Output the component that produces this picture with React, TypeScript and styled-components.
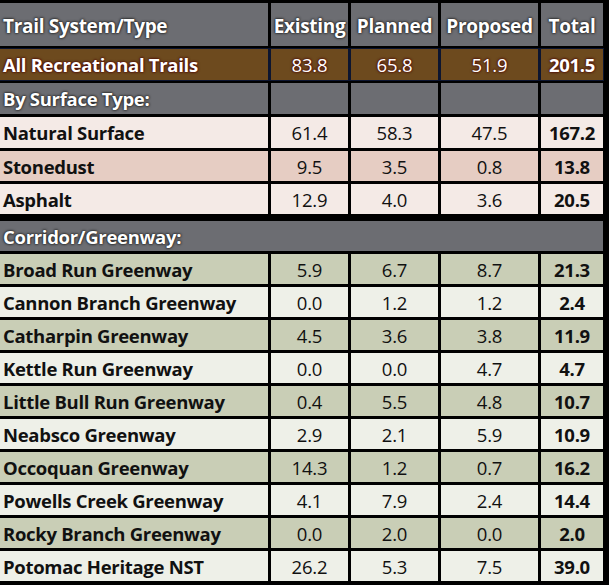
import styled, { createGlobalStyle, css } from 'styled-components';

const GlobalStyle = createGlobalStyle`
  html, body {
    margin: 0;
    padding: 0;
    background: #000;
  }
  body {
    font-family: 'Open Sans', 'Noto Sans', sans-serif;
  }
`;

type Tone = 'head' | 'total' | 'section' | 'rose' | 'roseDeep' | 'sage' | 'pale';

const tones: Record<Tone, { bg: string; color: string; shadow: string }> = {
  head: { bg: '#6c6d72', color: '#fff', shadow: '0 0 2px #1a1a1a, 0 0 3px #1a1a1a' },
  total: { bg: '#6d4a1e', color: '#fff', shadow: '0 0 2px #5a0000, 0 0 3px #3a0000' },
  section: { bg: '#6c6d72', color: '#fff', shadow: '0 0 2px #1a1a1a, 0 0 3px #1a1a1a' },
  rose: { bg: '#f4eae6', color: '#111', shadow: 'none' },
  roseDeep: { bg: '#e6cdc3', color: '#111', shadow: 'none' },
  sage: { bg: '#c9ceb6', color: '#111', shadow: 'none' },
  pale: { bg: '#eef0e8', color: '#111', shadow: 'none' },
};

const Table = styled.div`
  width: 609px;
  height: 585px;
  box-sizing: border-box;
  padding: 3px 6px 0 0;
  background: #000;
  display: flex;
  flex-direction: column;
  gap: 3px;
`;

const Row = styled.div<{ $h: number; $tone: Tone; $spaced?: boolean }>`
  display: grid;
  grid-template-columns: 268px 77px 87px 97px 62px;
  column-gap: 3px;
  height: ${(p) => p.$h}px;
  margin-top: ${(p) => (p.$spaced ? 4 : 0)}px;
  ${(p) =>
    p.$tone === 'total' &&
    css`
      background: #0c1530;
      outline: 1px solid #0c1530;
    `}
`;

const Cell = styled.div<{ $tone: Tone; $label?: boolean; $bold?: boolean }>`
  background: ${(p) => tones[p.$tone].bg};
  color: ${(p) => tones[p.$tone].color};
  text-shadow: ${(p) => tones[p.$tone].shadow};
  display: flex;
  align-items: center;
  justify-content: ${(p) => (p.$label ? 'flex-start' : 'center')};
  padding-left: ${(p) => (p.$label ? 3 : 0)}px;
  font-size: 18.5px;
  font-weight: ${(p) => (p.$bold || p.$label ? 700 : 400)};
  letter-spacing: ${(p) => (p.$label || p.$bold ? '-0.3px' : '-0.2px')};
  white-space: nowrap;
  overflow: hidden;
`;

const HeadCell = styled(Cell)`
  font-size: 19px;
  padding-top: 2px;
`;

type Line = { label: string; tone: Tone; values?: string[]; spaced?: boolean; h?: number };

const lines: Line[] = [
  { label: 'All Recreational Trails', tone: 'total', values: ['83.8', '65.8', '51.9', '201.5'], h: 31 },
  { label: 'By Surface Type:', tone: 'section', values: ['', '', '', ''], h: 31 },
  { label: 'Natural Surface', tone: 'rose', values: ['61.4', '58.3', '47.5', '167.2'], h: 31 },
  { label: 'Stonedust', tone: 'roseDeep', values: ['9.5', '3.5', '0.8', '13.8'] },
  { label: 'Asphalt', tone: 'rose', values: ['12.9', '4.0', '3.6', '20.5'] },
  { label: 'Corridor/Greenway:', tone: 'section', spaced: true },
  { label: 'Broad Run Greenway', tone: 'sage', values: ['5.9', '6.7', '8.7', '21.3'] },
  { label: 'Cannon Branch Greenway', tone: 'pale', values: ['0.0', '1.2', '1.2', '2.4'] },
  { label: 'Catharpin Greenway', tone: 'sage', values: ['4.5', '3.6', '3.8', '11.9'] },
  { label: 'Kettle Run Greenway', tone: 'pale', values: ['0.0', '0.0', '4.7', '4.7'] },
  { label: 'Little Bull Run Greenway', tone: 'sage', values: ['0.4', '5.5', '4.8', '10.7'] },
  { label: 'Neabsco Greenway', tone: 'pale', values: ['2.9', '2.1', '5.9', '10.9'] },
  { label: 'Occoquan Greenway', tone: 'sage', values: ['14.3', '1.2', '0.7', '16.2'] },
  { label: 'Powells Creek Greenway', tone: 'pale', values: ['4.1', '7.9', '2.4', '14.4'] },
  { label: 'Rocky Branch Greenway', tone: 'sage', values: ['0.0', '2.0', '0.0', '2.0'] },
  { label: 'Potomac Heritage NST', tone: 'pale', values: ['26.2', '5.3', '7.5', '39.0'] },
];

const SectionBand = styled.div`
  grid-column: 1 / -1;
  background: #6c6d72;
  color: #fff;
  text-shadow: 0 0 2px #1a1a1a, 0 0 3px #1a1a1a;
  display: flex;
  align-items: center;
  padding-left: 3px;
  font-size: 18.5px;
  font-weight: 700;
  letter-spacing: -0.3px;
`;

export default function App() {
  return (
    <>
      <GlobalStyle />
      <Table>
        <Row $h={43} $tone="head">
          {['Trail System/Type', 'Existing', 'Planned', 'Proposed', 'Total'].map((t, i) => (
            <HeadCell key={t} $tone="head" $label={i === 0} $bold>
              {t}
            </HeadCell>
          ))}
        </Row>
        {lines.map((l) => (
          <Row key={l.label} $h={l.h ?? 30} $tone={l.tone} $spaced={l.spaced}>
            {l.values ? (
              <>
                <Cell $tone={l.tone} $label>
                  {l.label}
                </Cell>
                {l.values.map((v, i) => (
                  <Cell key={i} $tone={l.tone} $bold={i === 3}>
                    {v}
                  </Cell>
                ))}
              </>
            ) : (
              <SectionBand>{l.label}</SectionBand>
            )}
          </Row>
        ))}
      </Table>
    </>
  );
}
